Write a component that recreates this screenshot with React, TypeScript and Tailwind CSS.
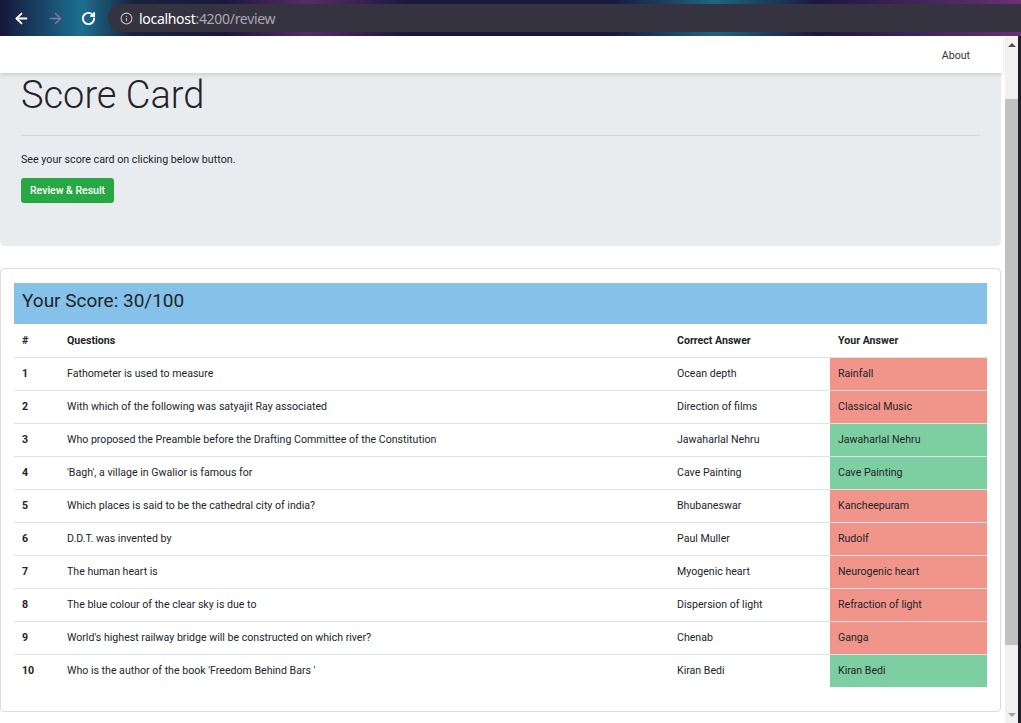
import { ArrowLeft, ArrowRight, RotateCw, Info } from "lucide-react";

// Quiz results
const rows: { q: string; correct: string; given: string }[] = [
    { q: "Fathometer is used to measure", correct: "Ocean depth", given: "Rainfall" },
    { q: "With which of the following was satyajit Ray associated", correct: "Direction of films", given: "Classical Music" },
    { q: "Who proposed the Preamble before the Drafting Committee of the Constitution", correct: "Jawaharlal Nehru", given: "Jawaharlal Nehru" },
    { q: "'Bagh', a village in Gwalior is famous for", correct: "Cave Painting", given: "Cave Painting" },
    { q: "Which places is said to be the cathedral city of india?", correct: "Bhubaneswar", given: "Kancheepuram" },
    { q: "D.D.T. was invented by", correct: "Paul Muller", given: "Rudolf" },
    { q: "The human heart is", correct: "Myogenic heart", given: "Neurogenic heart" },
    { q: "The blue colour of the clear sky is due to", correct: "Dispersion of light", given: "Refraction of light" },
    { q: "World's highest railway bridge will be constructed on which river?", correct: "Chenab", given: "Ganga" },
    { q: "Who is the author of the book 'Freedom Behind Bars '", correct: "Kiran Bedi", given: "Kiran Bedi" },
];

function BrowserBar() {
    return (
        <div className="h-[36px] shrink-0 flex items-center bg-[linear-gradient(90deg,#16153a_0%,#1a4f72_5%,#1d6f8f_8%,#18243f_13%,#1b1840_22%,#5a2a6a_30%,#1b1840_40%,#1b1840_60%,#1d6583_70%,#1b1840_80%,#6a2f78_100%)]">
            <div className="w-[108px] shrink-0 flex items-center pl-[13px] gap-[17px]">
                <ArrowLeft size={17} strokeWidth={2.6} className="text-white" />
                <ArrowRight size={17} strokeWidth={2.2} className="text-[#7d7b98]" />
                <RotateCw size={15} strokeWidth={3} className="text-white" />
            </div>
            <div className="flex-1 h-[28px] bg-[#35333f] rounded-l-full flex items-center pl-[12px] gap-[6px] font-['Noto_Sans',sans-serif] text-[14px]">
                <Info size={13} strokeWidth={2} className="text-[#c9c8d2]" />
                <span className="tracking-[-0.3px]">
                    <span className="text-white">localhost</span>
                    <span className="text-[#a9a8b6]">:4200/review</span>
                </span>
            </div>
        </div>
    );
}

function Scrollbar() {
    return (
        <div className="w-[18px] shrink-0 flex bg-white">
            <div className="w-[2px]" />
            <div className="w-[15px] bg-[#f1f1f1] flex flex-col items-center">
                <div className="h-[17px] flex items-center justify-center">
                    <div className="w-0 h-0 border-l-[4px] border-r-[4px] border-b-[4px] border-l-transparent border-r-transparent border-b-[#505050]" />
                </div>
                <div className="h-[46px]" />
                <div className="w-[13px] h-[546px] bg-[#c1c1c1]" />
                <div className="flex-1" />
                <div className="h-[17px] flex items-center justify-center">
                    <div className="w-0 h-0 border-l-[4px] border-r-[4px] border-t-[4px] border-l-transparent border-r-transparent border-t-[#a3a3a3]" />
                </div>
            </div>
            <div className="w-[3px] bg-[#202124]" />
        </div>
    );
}

export default function App() {
    return (
        <div className="w-[1021px] h-[723px] overflow-hidden flex flex-col bg-white font-['Roboto',sans-serif] text-[#212529]">
            <BrowserBar />
            <div className="flex flex-1 min-h-0">
                <div className="flex-1 min-w-0 flex flex-col">
                    {/* Navbar */}
                    <div className="h-[37px] shrink-0 bg-white relative z-10 shadow-[0_2px_4px_rgba(0,0,0,0.12)] flex items-center justify-end pr-[33px] pt-[3px]">
                        <span className="text-[10.6px] text-[#333]">About</span>
                    </div>

                    {/* Jumbotron */}
                    <div className="mr-[2px] h-[173px] shrink-0 bg-[#e9ecef] rounded-b-[5px] px-[21px]">
                        <h1 className="text-[38px] leading-[44px] font-light">Score Card</h1>
                        <hr className="mt-[18px] border-t border-[#d2d5d9]" />
                        <p className="mt-[16px] text-[10.7px] leading-[16px]">See your score card on clicking below button.</p>
                        <button className="mt-[10px] h-[25px] px-[9px] bg-[#28a745] text-white text-[10.5px] font-medium rounded-[3px]">
                            Review &amp; Result
                        </button>
                    </div>

                    {/* Results card */}
                    <div className="mr-[2px] mt-[22px] border border-[#dcdcdc] rounded-[4px] px-[13px] pt-[14px] pb-[24px]">
                        <div className="h-[41px] bg-[#85c1e9] flex items-center pl-[8px] pb-[7px]">
                            <h2 className="text-[19px] leading-none">Your Score: 30/100</h2>
                        </div>
                        <div className="grid grid-cols-[45px_610px_161px_1fr] h-[33px] items-center text-[10.6px] font-bold pt-[1px]">
                            <div className="pl-[8px]">#</div>
                            <div className="pl-[8px]">Questions</div>
                            <div className="pl-[8px]">Correct Answer</div>
                            <div className="pl-[8px]">Your Answer</div>
                        </div>
                        {rows.map((r, i) => (
                            <div key={i} className="grid grid-cols-[45px_610px_161px_1fr] h-[33px] border-t border-[#dee2e6] text-[10.6px]">
                                <div className="pl-[8px] flex items-center font-bold">{i + 1}</div>
                                <div className="pl-[8px] flex items-center">{r.q}</div>
                                <div className="pl-[8px] flex items-center">{r.correct}</div>
                                <div className={`pl-[8px] flex items-center ${r.correct === r.given ? "bg-[#7dcea0]" : "bg-[#f1948a]"}`}>
                                    {r.given}
                                </div>
                            </div>
                        ))}
                    </div>
                </div>
                <Scrollbar />
            </div>
        </div>
    );
}
